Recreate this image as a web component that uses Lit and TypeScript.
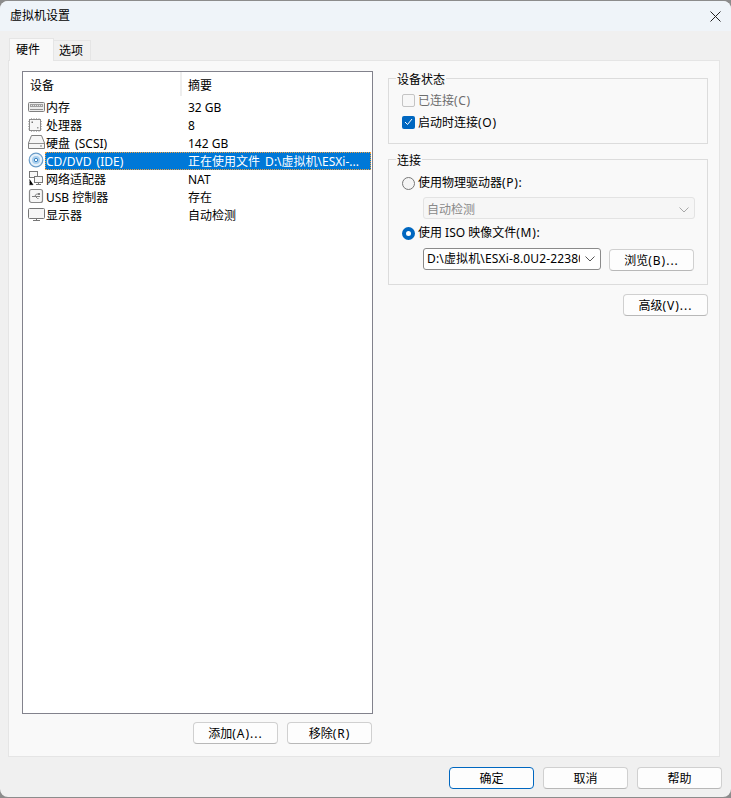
import { LitElement, html, css, svg } from "lit";
import { customElement } from "lit/decorators.js";

const icons: Record<string, unknown> = {
  mem: svg`<rect x="0.500" y="4.500" width="16" height="9" rx="1" fill="#ececec" stroke="#808080"/><rect x="2" y="6" width="13" height="3" fill="#a0a0a0"/><path d="M3 7.500h11" stroke="#e4e4e4" stroke-dasharray="1 1"/><path d="M2 11.500h13" stroke="#909090"/>`,
  cpu: svg`<path d="M3.500 2v14M6 2v14M8.500 2v14M11 2v14M0 5.500h14M0 8h14M0 10.500h14M0 13h14" stroke="#b4b4b4"/><rect x="1.500" y="3.500" width="11" height="11" fill="#f6f6f6" stroke="#8c8c8c"/><rect x="3.500" y="5.500" width="1.500" height="1.500" fill="#777"/><rect x="9" y="11" width="1.500" height="1.500" fill="#999"/>`,
  disk: svg`<path d="M3.500 1.500h10L16.500 9v5.500h-16V9z" fill="#f6f6f6" stroke="#808080"/><path d="M1 9.500h15" stroke="#909090"/><rect x="12" y="11.500" width="2" height="1" fill="#888"/>`,
  cd: svg`<circle cx="8" cy="8" r="6.800" fill="#e6f1fa" stroke="#6a9cc8" stroke-width="1.200"/><circle cx="8" cy="8" r="4" fill="#a9cfee"/><circle cx="8" cy="8" r="1.700" fill="#fff" stroke="#3d83c0"/>`,
  net: svg`<rect x="1.500" y="1.500" width="8" height="6" fill="#f7f7f7" stroke="#777"/><rect x="6.500" y="6.500" width="8" height="6" fill="#f7f7f7" stroke="#777"/><path d="M10.500 13v1.500M8 14.500h5" stroke="#777"/><path d="M1.500 9v6h4" stroke="#999" stroke-dasharray="1 1"/>`,
  usb: svg`<rect x="1.500" y="1.500" width="13" height="13" rx="2" fill="#f7f7f7" stroke="#8a8a8a" stroke-width="1.200"/><path d="M4 8.500h8M6.500 8.500l2-2.500h1.500M7.500 8.500l2 2h1" fill="none" stroke="#808080"/><rect x="10" y="5" width="2" height="2" fill="#808080"/>`,
  mon: svg`<rect x="0.500" y="2.500" width="16" height="10" rx="1" fill="#f6f6f6" stroke="#777"/><path d="M5 14.500h7" stroke="#777"/><path d="M8.500 12.500v2" stroke="#777"/>`,
};

const rows = [
  ["mem", "内存", "32 GB"],
  ["cpu", "处理器", "8"],
  ["disk", "硬盘 (SCSI)", "142 GB"],
  ["cd", "CD/DVD (IDE)", "正在使用文件 D:\\虚拟机\\ESXi-..."],
  ["net", "网络适配器", "NAT"],
  ["usb", "USB 控制器", "存在"],
  ["mon", "显示器", "自动检测"],
];

const chevron = html`<svg class="chev" width="10" height="6" viewBox="0 0 10 6"><path d="M0.500 0.500L5 5l4.500-4.500" fill="none" stroke="currentColor"/></svg>`;

/* The hotkey part, "(A)...", is set wider than the font's own advance. */
const hk = (text: string) => {
  const i = text.indexOf("(");
  return i < 0 ? text : html`${text.slice(0, i)}<span class="hk">${text.slice(i)}</span>`;
};

@customElement("app-root")
export class AppRoot extends LitElement {
  static styles = css`
    :host { display: block; width: 731px; height: 798px; background: #8c8c8c; overflow: hidden;
      font: 12px/16px "Noto Sans", "Noto Sans CJK SC", sans-serif; color: #000; }
    .win { box-sizing: border-box; width: 731px; background: #f0f0f0;
      border-radius: 8px; display: flex; flex-direction: column; padding: 0 0 0 1px; margin-top: 1px; height: 796px; }
    .title { height: 30px; flex: none; background: #eff4f9; border-radius: 8px 8px 0 0; margin-left: -1px;
      display: flex; align-items: center; justify-content: space-between; padding: 0 10px 0 10px; }
    .close { display: block; }
    .tabs { display: flex; align-items: flex-end; height: 29px; padding-left: 8px; flex: none; }
    .tab { box-sizing: border-box; border: 1px solid #e5e5e5; border-bottom: 0; }
    .tab.on { width: 45px; height: 23px; background: #f9f9f9; padding: 3px 0 0 6px; position: relative; top: 1px; }
    .tab.off { width: 38px; height: 20px; background: #f0f0f0; margin-left: -1px; padding: 2px 0 0 5px; }
    .panel { box-sizing: border-box; width: 712px; height: 697px; margin-left: 7px; flex: none; background: #f9f9f9;
      border: 1px solid #e5e5e5; padding: 10px 11px 0 13px; display: flex; gap: 15px; }
    .left { width: 351px; flex: none; display: flex; flex-direction: column; }
    .list { box-sizing: border-box; width: 351px; height: 643px; background: #fff; border: 1px solid #82828c; flex: none; }
    .head { display: flex; height: 26px; }
    .hcell { box-sizing: border-box; padding: 6px 0 0 6px; height: 24px; }
    .hcell.a { width: 159px; padding-left: 7px; border-right: 2px solid #eeeeee; }
    .row { display: flex; height: 18px; line-height: 18px; }
    .ic { width: 22px; flex: none; height: 18px; padding-left: 5px; box-sizing: border-box; }
    .ic svg { display: block; }
    .sel { display: flex; flex: 1; height: 18px; margin-right: 1px; }
    .row.on .sel { background: #0078d7; color: #fff; outline: 1px dotted #f0a040; outline-offset: -1px; }
    .n { box-sizing: border-box; width: 143px; flex: none; padding: 1px 0 0 1px; height: 18px; white-space: nowrap; }
    .s { white-space: nowrap; padding-top: 1px; height: 17px; }
    .wide { word-spacing: 2px; }
    .hk { letter-spacing: 0.7px; }
    .btns { display: flex; justify-content: flex-end; gap: 9px; margin: 8px 1px 0 0; }
    .btn { box-sizing: border-box; width: 85px; height: 22px; background: #fdfdfd; border: 1px solid #d0d0d0; border-bottom-color: #b8b8b8;
      border-radius: 4px; display: flex; align-items: center; justify-content: center; white-space: nowrap; padding: 2px 0 0; }
    .btn .hk { letter-spacing: 1px; }
    .right { width: 320px; flex: none; margin-top: -1px; }
    fieldset { margin: 0; border: 1px solid #dcdcdc; padding: 0 0 0 13px; min-width: 0; box-sizing: border-box; display: block; width: 320px; }
    legend { padding: 0 1px; margin-left: -6px; line-height: 20px; height: 16px; }
    fieldset.st { height: 74px; }
    fieldset.cn { height: 134px; margin-top: 7px; }
    .opt { display: flex; align-items: center; height: 16px; gap: 3px; white-space: nowrap; }
    .st .opt span.t { padding-top: 2px; }
    .st .opt.one { margin-top: 6px; color: #6d6d6d; }
    .st .opt.two { margin-top: 6px; }
    .box { box-sizing: border-box; width: 13px; height: 13px; border-radius: 2px; flex: none; }
    .box.off { border: 1px solid #c4c4c4; background: #f7f7f7; }
    .box.chk { background: #0067c0; display: flex; align-items: center; justify-content: center; }
    .radio { box-sizing: border-box; width: 13px; height: 13px; border-radius: 50%; flex: none; }
    .radio.off { border: 1px solid #777; background: #f5f5f5; }
    .radio.on { border: 4px solid #0067c0; background: #fff; }
    .cn .opt.one { margin-top: 8px; }
    .cn .opt.two { margin-top: 6px; }
    .sel1 { box-sizing: border-box; width: 272px; height: 22px; margin: 6px 0 0 21px; border: 1px solid #e3e3e3; border-radius: 3px; background: #f6f6f6;
      color: #8a8a8a; display: flex; align-items: center; justify-content: space-between; padding: 4px 5px 0 3px; }
    .sel1 .chev { color: #a8a8a8; }
    .line { display: flex; margin: 7px 0 0 21px; gap: 8px; align-items: flex-start; }
    .sel2 { box-sizing: border-box; width: 178px; height: 22px; border: 1px solid #8a8a8a; border-radius: 3px; background: #fff;
      display: flex; align-items: center; justify-content: space-between; padding: 0 5px 0 3px; }
    .sel2 span { width: 153px; overflow: hidden; white-space: nowrap; letter-spacing: 0.15px; }
    .sel2 .chev { color: #555; }
    .line .btn { margin-top: 1px; }
    .adv { display: flex; justify-content: flex-end; margin-top: 9px; }
    .foot { display: flex; justify-content: flex-end; gap: 9px; padding: 10px 9px 0 0; }
    .btn.pri { border: 1px solid #0067c0; }
  `;

  render() {
    return html`<div class="win">
      <div class="title"><span>虚拟机设置</span>
        <svg class="close" width="11" height="11" viewBox="0 0 11 11"><path d="M0.500 0.500l10 10M10.500 0.500l-10 10" stroke="#222" stroke-width="1"/></svg>
      </div>
      <div class="tabs"><div class="tab on">硬件</div><div class="tab off">选项</div></div>
      <div class="panel">
        <div class="left">
          <div class="list">
            <div class="head"><div class="hcell a">设备</div><div class="hcell">摘要</div></div>
            ${rows.map(([i, n, s]) => html`<div class="row ${i === "cd" ? "on" : ""}">
              <div class="ic"><svg width="17" height="18" viewBox="0 0 17 18">${icons[i]}</svg></div>
              <div class="sel"><div class="n ${i === "cd" || i === "disk" ? "wide" : ""}">${n}</div><div class="s ${i === "cd" ? "wide" : ""}">${s}</div></div>
            </div>`)}
          </div>
          <div class="btns"><div class="btn">${hk("添加(A)...")}</div><div class="btn">${hk("移除(R)")}</div></div>
        </div>
        <div class="right">
          <fieldset class="st"><legend>设备状态</legend>
            <div class="opt one"><span class="box off"></span><span class="t">${hk("已连接(C)")}</span></div>
            <div class="opt two"><span class="box chk"><svg width="9" height="8" viewBox="0 0 9 8"><path d="M1 4l2.500 2.500L8 1" fill="none" stroke="#fff"/></svg></span><span class="t">${hk("启动时连接(O)")}</span></div>
          </fieldset>
          <fieldset class="cn"><legend>连接</legend>
            <div class="opt one"><span class="radio off"></span><span>${hk("使用物理驱动器(P):")}</span></div>
            <div class="sel1"><span>自动检测</span>${chevron}</div>
            <div class="opt two"><span class="radio on"></span><span>${hk("使用 ISO 映像文件(M):")}</span></div>
            <div class="line">
              <div class="sel2"><span>D:\\虚拟机\\ESXi-8.0U2-22380479</span>${chevron}</div>
              <div class="btn">${hk("浏览(B)...")}</div>
            </div>
          </fieldset>
          <div class="adv"><div class="btn">${hk("高级(V)...")}</div></div>
        </div>
      </div>
      <div class="foot"><div class="btn pri">确定</div><div class="btn">取消</div><div class="btn">帮助</div></div>
    </div>`;
  }
}
